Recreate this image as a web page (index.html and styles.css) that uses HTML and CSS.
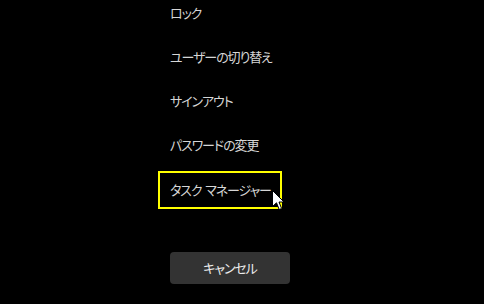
FILE: index.html
```html
<!DOCTYPE html>
<html lang="ja">
<head>
    <meta charset="UTF-8">
    <title>セキュリティ オプション</title>
    <link rel="stylesheet" href="styles.css">
</head>
<body>
    <div class="screen">
        <ul class="options">
            <li class="option">ロック</li>
            <li class="option">ユーザーの切り替え</li>
            <li class="option">サインアウト</li>
            <li class="option">パスワードの変更</li>
            <li class="option focused">タスク マネージャー
                <svg class="cursor" width="13" height="21" viewBox="0 0 13 21">
                    <path d="M0.5 0.5 L0.5 16.5 L4.5 12.8 L7.2 19.5 L9.6 18.5 L7 12 L12 12 Z" fill="#fff" stroke="#000" stroke-width="1"/>
                </svg>
            </li>
        </ul>
        <button class="cancel">キャンセル</button>
    </div>
</body>
</html>
```

FILE: styles.css
```css
* {
    box-sizing: border-box;
}

body {
    margin: 0;
    background-color: #000;
    font-family: "Noto Sans CJK JP", "Noto Sans", sans-serif;
    overflow: hidden;
}

.screen {
    padding-left: 158px;
}

.options {
    list-style: none;
    margin: -6px 0 0 0;
    padding: 0;
    display: flex;
    flex-direction: column;
    gap: 6px;
}

.option {
    position: relative;
    width: 124px;
    height: 38px;
    padding: 0 0 2px 10px;
    display: flex;
    align-items: center;
    font-size: 13px;
    letter-spacing: -1.1px;
    word-spacing: 2px;
    font-feature-settings: "palt";
    color: #d6d6d6;
    white-space: nowrap;
    border: 2px solid transparent;
}

.focused {
    border-color: #ffff00;
    margin-top: 1px;
}

.cursor {
    position: absolute;
    left: 112px;
    top: 17px;
}

.cancel {
    margin: 43px 0 0 12px;
    width: 120px;
    height: 32px;
    padding: 0 0 2px 0;
    border: none;
    border-radius: 4px;
    background-color: #333;
    color: #ececec;
    font-family: inherit;
    font-size: 13px;
    letter-spacing: -1.1px;
    font-feature-settings: "palt";
}
```
